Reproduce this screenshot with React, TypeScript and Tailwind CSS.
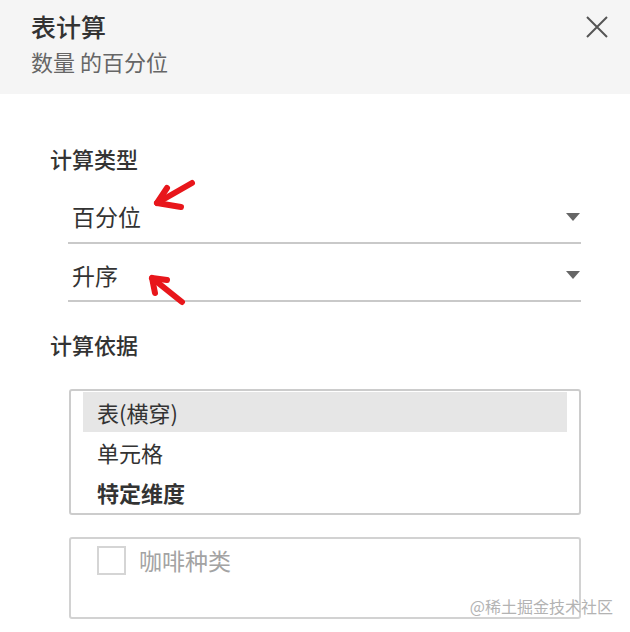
import React from 'react';

const font = { fontFamily: '"Noto Sans CJK SC", "Noto Sans", sans-serif' };

const Caret = () => (
  <svg width="14" height="8" viewBox="0 0 14 8" className="shrink-0">
    <path d="M0 0 L14 0 L7 8 Z" fill="#666" />
  </svg>
);

const Select = ({ value, className }: { value: string; className?: string }) => (
  <div className={`flex items-center justify-between border-b-2 border-[#c9c9c9] pl-[4px] pr-[1px] ${className ?? ''}`}>
    <span className="text-[23px] text-[#333]">{value}</span>
    <Caret />
  </div>
);

const Arrow = ({ tip, tail, a1, a2 }: { tip: string; tail: string; a1: string; a2: string }) => (
  <>
    <path d={`M${tip} L${tail}`} />
    <path d={`M${a1} L${tip} L${a2}`} />
  </>
);

export default function App() {
  const rows = [
    { label: '表(横穿)', active: true },
    { label: '单元格' },
    { label: '特定维度', bold: true },
  ];

  return (
    <div className="relative w-[630px] h-[632px] bg-white overflow-hidden" style={font}>
      {/* Header */}
      <div className="h-[94px] bg-[#f5f5f5] pl-[31px] pr-[22px] pt-[9px] flex justify-between">
        <div>
          <div className="text-[25px] leading-[34px] font-medium text-[#333]">表计算</div>
          <div className="text-[22px] leading-[32px] text-[#666] mt-[2px]">数量 的百分位</div>
        </div>
        <svg width="22" height="22" viewBox="0 0 22 22" className="mt-[7px]">
          <path d="M1 1 L21 21 M21 1 L1 21" stroke="#555" strokeWidth="2" />
        </svg>
      </div>

      {/* Body */}
      <div className="pl-[50px] pr-[49px]">
        <div className="mt-[48px] text-[22px] leading-[32px] font-medium text-[#333]">计算类型</div>
        <div className="ml-[18px] mt-[17px]">
          <Select value="百分位" className="h-[53px]" />
          <Select value="升序" className="h-[58px] pt-[6px]" />
        </div>

        <div className="mt-[26px] text-[22px] leading-[32px] font-medium text-[#333]">计算依据</div>

        <div className="ml-[19px] mt-[29px] border-2 border-[#cccccc] rounded-[3px] pl-[12px] pr-[12px] py-[1px]">
          {rows.map((r) => (
            <div
              key={r.label}
              className={`h-[40px] flex items-center pl-[14px] text-[22px] text-[#333] ${r.active ? 'bg-[#e6e6e6]' : ''} ${r.bold ? 'font-bold' : ''}`}
            >
              {r.label}
            </div>
          ))}
        </div>

        <div className="ml-[19px] mt-[22px] h-[82px] border-2 border-[#d2d2d2] rounded-[3px] pl-[26px] pt-[4px]">
          <div className="flex items-center gap-[13px]">
            <div className="w-[29px] h-[29px] border-2 border-[#d5d5d5] bg-white" />
            <span className="text-[23px] text-[#a3a3a3]">咖啡种类</span>
          </div>
        </div>
      </div>

      {/* Red annotation arrows */}
      <svg
        className="absolute left-0 top-0 pointer-events-none"
        width="630"
        height="632"
        fill="none"
        stroke="#e8161b"
        strokeWidth="6"
        strokeLinecap="round"
        strokeLinejoin="round"
      >
        <g>
          <Arrow tip="157,203" tail="192,183" a1="167,188" a2="181,207" />
          <Arrow tip="152,278" tail="182,302" a1="167,280" a2="155,293" />
        </g>
      </svg>

      {/* Watermark */}
      <div className="absolute right-[17px] bottom-[16px] text-[16px] leading-[20px] text-[#b3b3b3]">
        @稀土掘金技术社区
      </div>
    </div>
  );
}
